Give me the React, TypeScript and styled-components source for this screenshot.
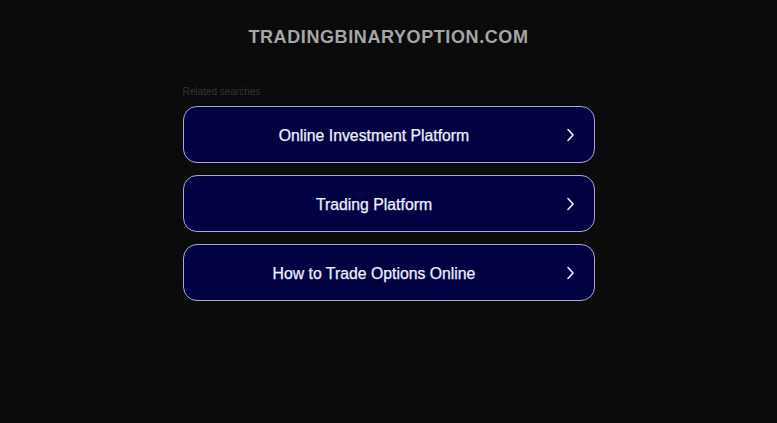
import styled, { createGlobalStyle } from "styled-components";

const Global = createGlobalStyle`
  html, body {
    margin: 0;
    padding: 0;
    background: #0b0b0b;
  }
  body {
    font-family: "Liberation Sans", Arial, sans-serif;
  }
`;

const links = ["Online Investment Platform", "Trading Platform", "How to Trade Options Online"];

const Page = styled.div`
  min-height: 423px;
  display: flex;
  flex-direction: column;
  align-items: center;
`;

const Domain = styled.h1`
  margin: 26px 0 0;
  font-size: 18px;
  line-height: 22px;
  font-weight: bold;
  color: #a6a6a6;
  letter-spacing: 0.6px;
`;

const Block = styled.div`
  width: 412px;
  margin-top: 38px;
  display: flex;
  flex-direction: column;
`;

const Caption = styled.div`
  font-size: 10px;
  line-height: 12px;
  color: #353535;
  margin-bottom: 8px;
`;

const List = styled.div`
  display: flex;
  flex-direction: column;
  gap: 12px;
`;

const Item = styled.a`
  position: relative;
  height: 57px;
  box-sizing: border-box;
  padding: 2px 29px 0 0;
  border: 1px solid #a9a9d6;
  border-radius: 14px;
  background: #020243;
  display: flex;
  align-items: center;
  justify-content: center;
  color: #f0f0ff;
  font-size: 15.8px;
  font-weight: normal;
  -webkit-text-stroke: 0.25px #f0f0ff;
  text-decoration: none;
  cursor: pointer;
`;

const Arrow = styled.svg`
  position: absolute;
  right: 17px;
  top: 50%;
  margin-top: -7px;
`;

export default function App() {
  return (
    <>
      <Global />
      <Page>
        <Domain>TRADINGBINARYOPTION.COM</Domain>
        <Block>
          <Caption>Related searches</Caption>
          <List>
            {links.map((t) => (
              <Item key={t}>
                {t}
                <Arrow width="14" height="14" viewBox="0 0 14 14" fill="none">
                  <path d="M5 1.5 L10 7 L5 12.5" stroke="#f0f0ff" strokeWidth="1.6" strokeLinecap="round" strokeLinejoin="round" />
                </Arrow>
              </Item>
            ))}
          </List>
        </Block>
      </Page>
    </>
  );
}
